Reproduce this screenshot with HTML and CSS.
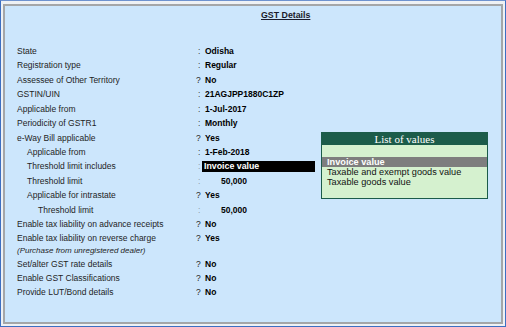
FILE: index.html
```html
<!DOCTYPE html>
<html lang="en">
<head>
  <meta charset="UTF-8" />
  <title>GST Details</title>
  <link rel="stylesheet" href="styles.css">
</head>
<body>
  <div class="frame">
    <div class="panel">
      <h1 class="title">GST Details</h1>

      <div class="form">
        <div class="row"><span class="lbl">State</span><span class="sep colon">:</span><span class="val">Odisha</span></div>
        <div class="row"><span class="lbl">Registration type</span><span class="sep colon">:</span><span class="val">Regular</span></div>
        <div class="row"><span class="lbl">Assessee of Other Territory</span><span class="sep">?</span><span class="val">No</span></div>
        <div class="row"><span class="lbl">GSTIN/UIN</span><span class="sep colon">:</span><span class="val">21AGJPP1880C1ZP</span></div>
        <div class="row"><span class="lbl">Applicable from</span><span class="sep colon">:</span><span class="val">1-Jul-2017</span></div>
        <div class="row"><span class="lbl">Periodicity of GSTR1</span><span class="sep colon">:</span><span class="val">Monthly</span></div>
        <div class="row"><span class="lbl">e-Way Bill applicable</span><span class="sep">?</span><span class="val">Yes</span></div>
        <div class="row"><span class="lbl lvl1">Applicable from</span><span class="sep colon">:</span><span class="val">1-Feb-2018</span></div>
        <div class="row"><span class="lbl lvl1">Threshold limit includes</span><span class="sep colon dim">:</span><span class="val"><span class="current">Invoice value</span></span></div>
        <div class="row"><span class="lbl lvl1">Threshold limit</span><span class="sep colon dim">:</span><span class="val amount">50,000</span></div>
        <div class="row"><span class="lbl lvl1">Applicable for intrastate</span><span class="sep">?</span><span class="val">Yes</span></div>
        <div class="row"><span class="lbl lvl2">Threshold limit</span><span class="sep colon dim">:</span><span class="val amount">50,000</span></div>
        <div class="row"><span class="lbl">Enable tax liability on advance receipts</span><span class="sep">?</span><span class="val">No</span></div>
        <div class="row">
          <span class="lbl">Enable tax liability on reverse charge<span class="note">(Purchase from unregistered dealer)</span></span><span class="sep">?</span><span class="val">Yes</span>
        </div>
        <div class="row"><span class="lbl">Set/alter GST rate details</span><span class="sep">?</span><span class="val">No</span></div>
        <div class="row"><span class="lbl">Enable GST Classifications</span><span class="sep">?</span><span class="val">No</span></div>
        <div class="row"><span class="lbl">Provide LUT/Bond details</span><span class="sep">?</span><span class="val">No</span></div>
      </div>

      <div class="lov">
        <div class="lov-head">List of values</div>
        <ul class="lov-list">
          <li class="picked">Invoice value</li>
          <li>Taxable and exempt goods value</li>
          <li>Taxable goods value</li>
        </ul>
      </div>
    </div>
  </div>
</body>
</html>
```

FILE: styles.css
```css
:root {
  --panel: #cce6fc;
  --edge: #3d6fc2;
  --text: #1e1e1e;
  --lov-head: #1c5c4a;
  --lov-body: #d5f1cf;
}

html, body {
  margin: 0;
  height: 100%;
}

body {
  font-family: "Liberation Sans", Arial, sans-serif;
  font-size: 8.5px;
  color: var(--text);
  background: #eef1f4;
}

.frame {
  box-sizing: border-box;
  height: 327px;
  border: 1px solid var(--edge);
  border-top-color: #6f93cf;
  padding: 3px 2px 2px 2px;
  background: #eef1f4;
}

.panel {
  position: relative;
  box-sizing: border-box;
  height: 100%;
  border: 2px solid #a4a6a8;
  background: var(--panel);
}

.title {
  margin: 0;
  padding: 4px 0 0 256px;
  font-size: 8.8px;
  line-height: 11px;
  font-weight: bold;
  text-decoration: underline;
  color: #1b1b2a;
}

.form {
  padding: 23px 0 0 12px;
}

.row {
  display: flex;
  align-items: flex-start;
  line-height: 14.42px;
}

.lbl {
  width: 179px;
  flex: none;
  box-sizing: border-box;
}

.lvl1 { padding-left: 10px; }
.lvl2 { padding-left: 21px; }

.note {
  display: block;
  font-size: 8px;
  font-style: italic;
  line-height: 10.7px;
}

.sep {
  width: 9px;
  flex: none;
}

.colon {
  box-sizing: border-box;
  padding-left: 2px;
  color: #3a3a3a;
}

.dim {
  color: #8d9cab;
}

.val {
  font-weight: bold;
  color: #000;
}

.amount {
  width: 42px;
  text-align: right;
}

.current {
  display: block;
  width: 111px;
  height: 11px;
  margin: 1.7px 0 0 -3px;
  padding-left: 2px;
  line-height: 11px;
  background: #000;
  color: #fff;
  font-size: 8.8px;
}

.lov {
  position: absolute;
  left: 316px;
  top: 126px;
  width: 165px;
  height: 65px;
  border: 1px solid var(--lov-head);
  background: var(--lov-body);
}

.lov-head {
  height: 12px;
  line-height: 12px;
  background: var(--lov-head);
  color: #fff;
  text-align: center;
  font-family: "Liberation Serif", "Times New Roman", serif;
  font-size: 11px;
}

.lov-list {
  list-style: none;
  margin: 0;
  padding: 12px 0 0 0;
  font-size: 9.2px;
  line-height: 10px;
  color: #111;
}

.lov-list li {
  padding-left: 5px;
}

.lov-list .picked {
  background: #7e7e7e;
  color: #fff;
  font-weight: bold;
}
```
